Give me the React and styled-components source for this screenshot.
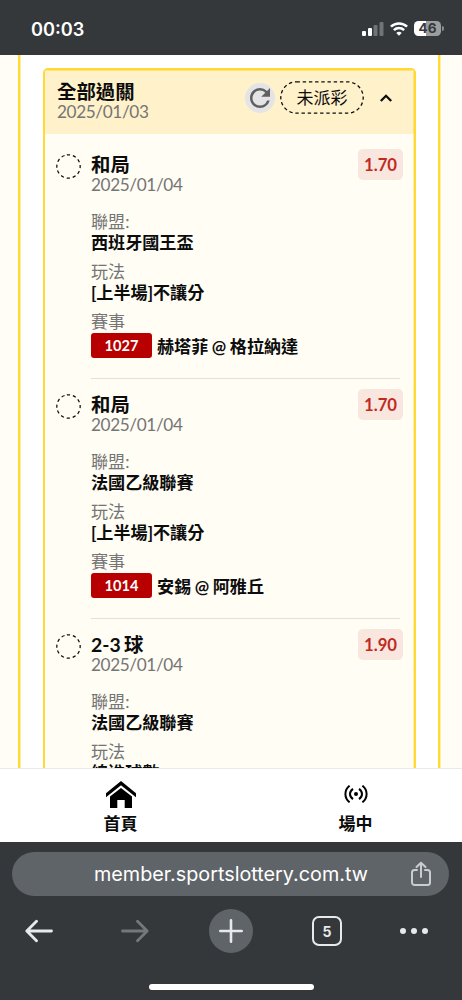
import React from 'react';
import styled, { createGlobalStyle } from 'styled-components';
import { MdRefresh } from 'react-icons/md';

const GlobalStyle = createGlobalStyle`
  body {
    margin: 0;
    background: #34383b;
    font-family: Lato, 'Noto Sans CJK TC', sans-serif;
    color: #0c0c0c;
  }

  svg {
    display: block;
  }
`;

const Screen = styled.div`
  display: flex;
  flex-direction: column;
  width: 462px;
  height: 1000px;
  overflow: hidden;
`;

const StatusBar = styled.header`
  display: flex;
  align-items: center;
  justify-content: space-between;
  box-sizing: border-box;
  flex: none;
  height: 55px;
  padding: 2px 18px 0 31px;
  background: #34383b;
  color: #fff;
`;

const Clock = styled.span`
  font-family: Inter, sans-serif;
  font-size: 18.2px;
  font-weight: 600;
  line-height: 22px;
`;

const StatusIcons = styled.div`
  display: flex;
  align-items: center;
  gap: 6px;
`;

const Page = styled.main`
  flex: none;
  box-sizing: border-box;
  height: 713px;
  padding: 0 22px 0 18px;
  overflow: hidden;
  background: #fffdf5;
`;

const Panel = styled.section`
  box-sizing: border-box;
  height: 900px;
  padding: 13px 22px 0 23px;
  border: solid #ffd934;
  border-width: 0 2px;
  background: #fff;
  box-shadow: inset 1px 0 #ffeea6, 1px 0 #ffeea6;
`;

const Card = styled.article`
  box-sizing: border-box;
  height: 900px;
  border: 2px solid #ffd934;
  border-radius: 5px;
  background: #fffdf4;
  box-shadow: inset -1px 0 #ffeea6;
  overflow: hidden;
`;

const CardHeader = styled.div`
  display: flex;
  justify-content: space-between;
  box-sizing: border-box;
  height: 64px;
  padding: 11px 22px 0 12px;
  background: #fff1c9;
  box-shadow: inset 0 1px #ffe374, inset -1px 0 #ffe374;
`;

const Title = styled.h2`
  margin: 0;
  font-size: 19.4px;
  font-weight: 700;
  line-height: 21px;
  word-spacing: -1.5px;
  white-space: nowrap;
`;

const DateText = styled.div`
  font-size: 17.2px;
  line-height: 20px;
  letter-spacing: -0.38px;
  color: #757575;
`;

const Actions = styled.div`
  display: flex;
  align-items: center;
  height: 33px;
`;

const RefreshButton = styled.button`
  display: flex;
  align-items: center;
  justify-content: center;
  width: 30px;
  height: 30px;
  padding: 0;
  border: none;
  border-radius: 50%;
  background: #e4e4e6;
  color: #606060;
`;

const Status = styled.div`
  display: grid;
  margin: 0 16px 0 5px;

  > * {
    grid-area: 1 / 1;
  }
`;

const StatusText = styled.span`
  place-self: center;
  padding-top: 1px;
  font-size: 17px;
  line-height: 20px;
`;

const List = styled.div`
  padding-top: 5px;
`;

const Item = styled.div`
  display: flex;
  padding: 0 14px 0 11px;
`;

const CircleCell = styled.div`
  flex: none;
  width: 35px;
  padding-top: 15px;
`;

const ItemBody = styled.div`
  flex: 1;
  box-sizing: border-box;
  height: 240px;
  padding-top: 15px;
  border-bottom: 1px solid #e4e1da;
`;

const ItemHead = styled.div`
  display: flex;
  justify-content: space-between;
  margin-bottom: 17px;
`;

const Odds = styled.div`
  width: 45px;
  height: 31px;
  margin: -5px -3px 0 0;
  border-radius: 5px;
  background: #f9e6df;
  color: #bf2b1d;
  font-size: 16.7px;
  font-weight: 700;
  line-height: 32px;
  text-align: center;
`;

const Field = styled.div`
  margin-bottom: 9px;
  font-size: 17.1px;
  line-height: 20px;
`;

const Label = styled.div`
  color: #757575;
`;

const Value = styled.div`
  font-weight: 700;
  line-height: 21px;
  white-space: nowrap;
`;

const Match = styled.div`
  display: flex;
  align-items: flex-start;
  gap: 5px;
  margin-top: 1px;
  font-weight: 700;
  line-height: 25px;
  word-spacing: -0.6px;
`;

const Teams = styled.span`
  padding-top: 1px;
`;

const MatchNo = styled.span`
  width: 61px;
  height: 25px;
  border-radius: 3px;
  background: #b80000;
  color: #fff;
  font-size: 14.6px;
  text-align: center;
`;

const TabBar = styled.nav`
  display: flex;
  box-sizing: border-box;
  flex: none;
  height: 74px;
  padding-left: 3px;
  border-top: 1px solid #e9e9e9;
  background: #fff;
`;

const Tab = styled.a`
  display: flex;
  flex: none;
  flex-direction: column;
  align-items: center;
  width: 235px;
  font-size: 17px;
  font-weight: 700;
  line-height: 20px;
`;

const TabIcon = styled.div`
  display: flex;
  align-items: center;
  box-sizing: border-box;
  height: 45px;
  padding-top: 5px;
`;

const Browser = styled.footer`
  display: flex;
  flex-direction: column;
  flex: 1;
  padding: 10px 13px 0 12px;
  background: #34383b;
  color: #e6eaed;
`;

const AddressBar = styled.div`
  display: flex;
  align-items: center;
  justify-content: space-between;
  box-sizing: border-box;
  height: 44px;
  padding: 0 18px 0 82px;
  border-radius: 22px;
  background: #5f6468;
`;

const Url = styled.span`
  font-family: Inter, sans-serif;
  font-size: 19.8px;
  line-height: 24px;
  color: #fff;
  white-space: nowrap;
`;

const Controls = styled.div`
  display: flex;
  align-items: center;
  gap: 52px;
  height: 44px;
  margin-top: 13px;
  padding-left: 5px;
`;

const Control = styled.div`
  display: flex;
  flex: none;
  align-items: center;
  justify-content: center;
  width: 44px;
  height: 44px;
  border-radius: 50%;
  background: ${props => (props.$filled ? '#5f6468' : 'none')};

  &:last-child {
    margin-left: -9px;
  }
`;

const TabCount = styled.div`
  box-sizing: border-box;
  width: 30px;
  height: 30px;
  border: 2px solid #e6eaed;
  border-radius: 7px;
  font-family: Inter, sans-serif;
  font-size: 14px;
  font-weight: 700;
  line-height: 27px;
  text-align: center;
`;

const HomeIndicator = styled.div`
  align-self: center;
  width: 165px;
  height: 6px;
  margin: 31px 0 0 1px;
  border-radius: 3px;
  background: #fff;
`;

const Battery = styled.div`
  display: flex;
  align-items: center;
  gap: 1px;

  &:after {
    content: '';
    width: 2px;
    height: 5px;
    border-radius: 0 2px 2px 0;
    background: #8b8d8f;
  }
`;

const BatteryLevel = styled.div`
  width: 27px;
  height: 15px;
  border-radius: 4.5px;
  background: linear-gradient(90deg, #fff 46%, #9b9d9e 46%);
  color: #34383b;
  font-family: Inter, sans-serif;
  font-size: 13.5px;
  font-weight: 700;
  line-height: 15px;
  text-align: center;
`;

const bets = [
  {
    pick: '和局',
    odds: '1.70',
    league: '西班牙國王盃',
    play: '[上半場]不讓分',
    no: '1027',
    match: '赫塔菲 @ 格拉納達',
  },
  {
    pick: '和局',
    odds: '1.70',
    league: '法國乙級聯賽',
    play: '[上半場]不讓分',
    no: '1014',
    match: '安錫 @ 阿雅丘',
  },
  {
    pick: '2-3 球',
    odds: '1.90',
    league: '法國乙級聯賽',
    play: '總進球數',
  },
];

const SignalIcon = () => (
  <svg width="22" height="14" viewBox="0 0 22 14" fill="#fff">
    <rect x="0" y="9" width="4" height="5" rx="1" />
    <rect x="6" y="6" width="4" height="8" rx="1" />
    <rect x="11.5" y="3" width="4" height="11" rx="1" opacity=".3" />
    <rect x="17.5" y="0" width="4" height="14" rx="1" opacity=".3" />
  </svg>
);

const WifiIcon = () => (
  <svg width="18" height="14" viewBox="0 0 18 14" fill="none" stroke="#fff" strokeWidth="2.5">
    <path d="M.9 4.7C5.5.3 12.5.3 17.1 4.7" />
    <path d="M3.9 8.1c2.9-2.8 7.3-2.8 10.2 0" />
    <path d="M9 13.7 6.3 10.9c1.5-1.4 3.9-1.4 5.4 0Z" fill="#fff" stroke="none" />
  </svg>
);

const PillOutline = () => (
  <svg width="84" height="33" viewBox="0 0 84 33" fill="none" stroke="#0c0c0c">
    <rect x=".8" y=".8" width="82.4" height="31.4" rx="15.7" strokeWidth="1.3" strokeDasharray="3.4 2.8" />
  </svg>
);

const ChevronUp = () => (
  <svg width="12" height="8" viewBox="0 0 12 8" fill="none" stroke="#0c0c0c" strokeWidth="2.3">
    <path d="M.8 7 6 1.8 11.2 7" />
  </svg>
);

const DashedCircle = () => (
  <svg width="25" height="25" viewBox="0 0 25 25" fill="none" stroke="#0c0c0c">
    <circle
      cx="12.5"
      cy="12.5"
      r="11.7"
      strokeWidth="1.25"
      strokeDasharray="3.2 2.926"
      transform="rotate(-98 12.5 12.5)"
    />
  </svg>
);

const HomeIcon = () => (
  <svg width="30" height="27" viewBox="0 0 30 27">
    <path d="M0 12.2 15 0l15 12.2v4L15 4.2 0 16.2Z" />
    <path d="M4 15.5 15 7l11 8.5V27h-7.3v-8h-7.4v8H4Z" />
  </svg>
);

const LiveIcon = () => (
  <svg width="24" height="18" viewBox="0 0 24 18" fill="none" stroke="#000" strokeWidth="2">
    <path d="M5.6.7C0 5 0 13 5.6 17.3M18.4.7c5.6 4.3 5.6 12.3 0 16.6" />
    <path d="M9 3.9c-4 2.8-4 7.4 0 10.2M15 3.9c4 2.8 4 7.4 0 10.2" />
    <circle cx="12" cy="9" r="2" fill="#000" stroke="none" />
  </svg>
);

const ShareIcon = () => (
  <svg
    width="20"
    height="26"
    viewBox="0 0 20 26"
    fill="none"
    stroke="#c9ccd2"
    strokeWidth="2"
    strokeLinecap="round"
    strokeLinejoin="round"
  >
    <path d="M6 9H3.5A2.5 2.5 0 0 0 1 11.5v10A2.5 2.5 0 0 0 3.5 24h13a2.5 2.5 0 0 0 2.5-2.5v-10A2.5 2.5 0 0 0 16.5 9H14" />
    <path d="M10 16V2M5.5 6 10 1.7 14.5 6" />
  </svg>
);

const ArrowIcon = ({ forward }) => (
  <svg
    width="28"
    height="24"
    viewBox="0 0 28 24"
    fill="none"
    stroke={forward ? '#75777a' : '#e6eaed'}
    strokeWidth="2.8"
    strokeLinecap="round"
    strokeLinejoin="round"
  >
    <path d={forward ? 'M1.5 12H26M16.5 2.2 26.2 12l-9.7 9.8' : 'M26.5 12H2M11.5 2.2 1.8 12l9.7 9.8'} />
  </svg>
);

const PlusIcon = () => (
  <svg width="24" height="24" viewBox="0 0 24 24" stroke="#e6eaed" strokeWidth="2.6" strokeLinecap="round">
    <path d="M1.3 12h21.4M12 1.3v21.4" />
  </svg>
);

const MoreIcon = () => (
  <svg width="28" height="6" viewBox="0 0 28 6" fill="#e6eaed">
    <circle cx="3" cy="3" r="3" />
    <circle cx="14" cy="3" r="3" />
    <circle cx="25" cy="3" r="3" />
  </svg>
);

const Bet = ({ pick, odds, league, play, no, match }) => (
  <Item>
    <CircleCell>
      <DashedCircle />
    </CircleCell>
    <ItemBody>
      <ItemHead>
        <div>
          <Title as="h3">{pick}</Title>
          <DateText>2025/01/04</DateText>
        </div>
        <Odds>{odds}</Odds>
      </ItemHead>
      <Field>
        <Label>聯盟:</Label>
        <Value>{league}</Value>
      </Field>
      <Field>
        <Label>玩法</Label>
        <Value>{play}</Value>
      </Field>
      {no && (
        <Field>
          <Label>賽事</Label>
          <Match>
            <MatchNo>{no}</MatchNo>
            <Teams>{match}</Teams>
          </Match>
        </Field>
      )}
    </ItemBody>
  </Item>
);

export default () => (
  <Screen>
    <GlobalStyle />
    <StatusBar>
      <Clock>00:03</Clock>
      <StatusIcons>
        <SignalIcon />
        <WifiIcon />
        <Battery>
          <BatteryLevel>46</BatteryLevel>
        </Battery>
      </StatusIcons>
    </StatusBar>
    <Page>
      <Panel>
        <Card>
          <CardHeader>
            <div>
              <Title>全部過關</Title>
              <DateText>2025/01/03</DateText>
            </div>
            <Actions>
              <RefreshButton>
                <MdRefresh size={30} />
              </RefreshButton>
              <Status>
                <PillOutline />
                <StatusText>未派彩</StatusText>
              </Status>
              <ChevronUp />
            </Actions>
          </CardHeader>
          <List>
            {bets.map((bet, i) => (
              <Bet key={i} {...bet} />
            ))}
          </List>
        </Card>
      </Panel>
    </Page>
    <TabBar>
      <Tab>
        <TabIcon>
          <HomeIcon />
        </TabIcon>
        首頁
      </Tab>
      <Tab>
        <TabIcon>
          <LiveIcon />
        </TabIcon>
        場中
      </Tab>
    </TabBar>
    <Browser>
      <AddressBar>
        <Url>member.sportslottery.com.tw</Url>
        <ShareIcon />
      </AddressBar>
      <Controls>
        <Control>
          <ArrowIcon />
        </Control>
        <Control>
          <ArrowIcon forward />
        </Control>
        <Control $filled>
          <PlusIcon />
        </Control>
        <Control>
          <TabCount>5</TabCount>
        </Control>
        <Control>
          <MoreIcon />
        </Control>
      </Controls>
      <HomeIndicator />
    </Browser>
  </Screen>
);
